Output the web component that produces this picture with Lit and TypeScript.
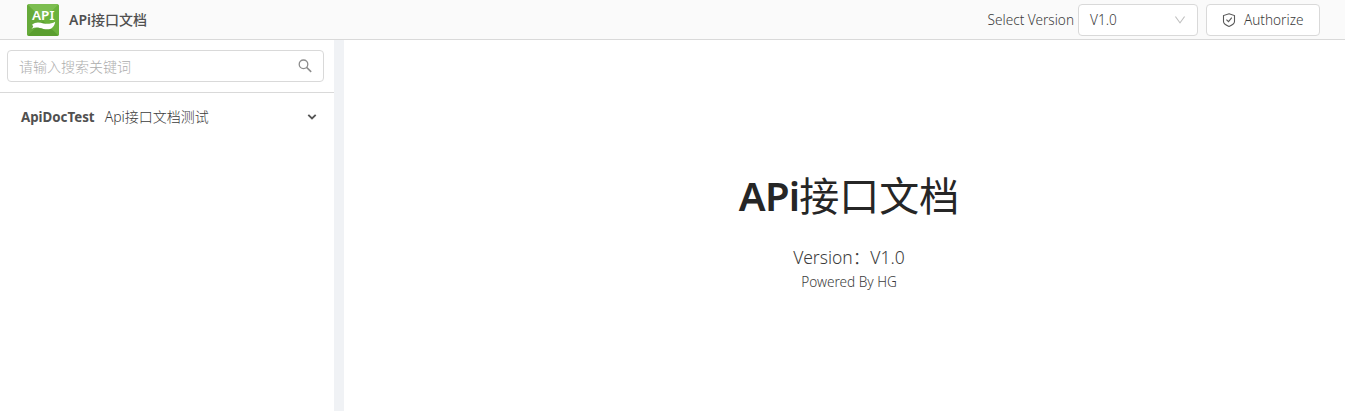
import { LitElement, html, css } from "lit";
import { customElement, property } from "lit/decorators.js";

@customElement("app-logo")
class AppLogo extends LitElement {
  static styles = css`
    :host { display: block; width: 32px; height: 32px; }
    svg { display: block; }
    .word { font: 600 12px "Noto Sans", sans-serif; fill: #fff; }
  `;
  render() {
    return html`<svg width="32" height="32" viewBox="0 0 32 32">
      <defs><clipPath id="r"><rect width="32" height="32" rx="2.5" /></clipPath></defs>
      <g clip-path="url(#r)">
        <rect width="32" height="32" fill="#6cb33f" />
        <path d="M0 0H32L16 16Z" fill="#7cbd50" />
        <path d="M0 0L16 16L0 32Z" fill="#66aa3a" />
        <path d="M32 0L16 16L32 32Z" fill="#6bb23c" />
        <path d="M0 32L16 17L32 32Z" fill="#5a9e2f" />
      </g>
      <text class="word" x="5" y="16" textLength="22.5" lengthAdjust="spacingAndGlyphs">API</text>
      <path d="M4.800 21C9 17.200 12.500 18.400 16.500 19.400C20.500 20.300 24.500 19.800 28.200 17.800C27 25 22.500 26.200 16.500 24.900C12 23.700 8.500 22.800 4.500 24.800C6.500 23 6.800 21.500 4.800 21Z" fill="#fff" />
    </svg>`;
  }
}

@customElement("version-select")
class VersionSelect extends LitElement {
  @property() value = "";
  static styles = css`
    :host {
      display: flex; align-items: center; justify-content: space-between;
      box-sizing: border-box; width: 120px; height: 32px; padding: 0 11px;
      background: #fff; border: 1px solid #d9d9d9; border-radius: 4px;
    }
    svg { display: block; fill: #bfbfbf; }
  `;
  render() {
    return html`<span>${this.value}</span>
      <svg width="12" height="12" viewBox="64 64 896 896"><path d="M884 256h-75c-5.100 0-9.900 2.500-12.900 6.600L512 654.200 227.900 262.600c-3-4.100-7.800-6.600-12.900-6.600h-75c-6.500 0-10.300 7.400-6.500 12.700l352.600 486.100c12.800 17.600 39 17.600 51.700 0l352.600-486.100c3.900-5.300.1-12.700-6.400-12.700z" /></svg>`;
  }
}

@customElement("app-root")
class AppRoot extends LitElement {
  static styles = css`
    * { box-sizing: border-box; }
    :host {
      display: flex; flex-direction: column; height: 411px; overflow: hidden;
      background: #fff; color: #3c3c3c;
      font: 300 13.600px/22px "Noto Sans", "Noto Sans CJK SC", sans-serif;
    }
    .header {
      display: flex; align-items: center; justify-content: space-between;
      height: 40px; padding: 0 25px 0 27px;
      background: #fafafa; border-bottom: 1px solid #d9d9d9;
    }
    .brand, .tools { display: flex; align-items: center; }
    .brand { gap: 10px; }
    .brand-name { font-weight: 600; font-size: 14px; color: #505050; }
    .brand-name .cjk { font-weight: 500; }
    .version-label { margin-right: 4px; }
    .authorize {
      display: flex; align-items: center; gap: 8px;
      width: 114px; height: 32px; margin-left: 8px; padding: 0 15px;
      font: inherit; color: inherit; background: #fff;
      border: 1px solid #d9d9d9; border-radius: 4px;
    }
    .authorize svg { display: block; flex: none; }
    .body { display: flex; flex: 1; min-height: 0; }
    .side { width: 334px; }
    .search { padding: 10px 10px 10px 7px; border-bottom: 1px solid #d9d9d9; }
    .field {
      display: flex; align-items: center; justify-content: space-between;
      height: 32px; padding: 0 11px;
      border: 1px solid #d9d9d9; border-radius: 4px;
    }
    .cjk { font-weight: 300; font-size: 14px; line-height: 1; font-family: "Noto Sans CJK SC", sans-serif; }
    .placeholder { color: #adadad; line-height: 22px; }
    .group { display: flex; align-items: center; height: 48px; padding: 0 17px 0 21px; }
    .group-name { font-weight: 700; margin-right: 10px; font-size: 13.300px; color: #505050; }
    .group-desc { flex: 1; font-size: 14px; }
    .split { width: 10px; background: #f0f2f5; }
    .main { flex: 1; display: flex; flex-direction: column; align-items: center; padding: 132px 0 0 9px; }
    .title { margin: 0; font-size: 40px; line-height: 48px; font-weight: 600; letter-spacing: -.8px; color: #262626; white-space: nowrap; }
    .title .cjk { font-size: 40px; font-weight: 400; letter-spacing: 0; }
    .version { margin-top: 24px; font-size: 17.500px; line-height: 27px; }
    .powered { line-height: 22px; }
  `;
  render() {
    return html`
      <header class="header">
        <div class="brand">
          <app-logo></app-logo>
          <span class="brand-name">APi<span class="cjk">接口文档</span></span>
        </div>
        <div class="tools">
          <span class="version-label">Select Version</span>
          <version-select value="V1.0"></version-select>
          <button class="authorize">
            <svg width="14" height="14" viewBox="0 0 14 14" fill="none" stroke="#595959" stroke-width="1.100">
              <path d="M7 .8L12.500 2.600V8.600C12.500 10.700 9.500 12.500 7 13.400C4.500 12.500 1.500 10.700 1.500 8.600V2.600Z" />
              <path d="M4.400 6.600L6.500 8.700L9.800 4.700" />
            </svg>
            <span class="auth-label">Authorize</span>
          </button>
        </div>
      </header>
      <div class="body">
        <aside class="side">
          <div class="search">
            <div class="field">
              <span class="placeholder cjk">请输入搜索关键词</span>
              <svg width="14" height="14" viewBox="0 0 14 14" fill="none" stroke="#8c8c8c" stroke-width="1.300">
                <circle cx="5.500" cy="5.300" r="4.300" />
                <path d="M8.600 8.400L13.200 12.900" stroke-width="1.500" />
              </svg>
            </div>
          </div>
          <div class="group">
            <span class="group-name">ApiDocTest</span>
            <span class="group-desc">Api<span class="cjk">接口文档测试</span></span>
            <svg width="10" height="10" viewBox="0 0 10 10" fill="none" stroke="#555" stroke-width="1.900"><path d="M1.300 2.900L5 6.400L8.700 2.900" /></svg>
          </div>
        </aside>
        <div class="split"></div>
        <main class="main">
          <h1 class="title">APi<span class="cjk">接口文档</span></h1>
          <div class="version">Version：V1.0</div>
          <div class="powered">Powered By HG</div>
        </main>
      </div>`;
  }
}
